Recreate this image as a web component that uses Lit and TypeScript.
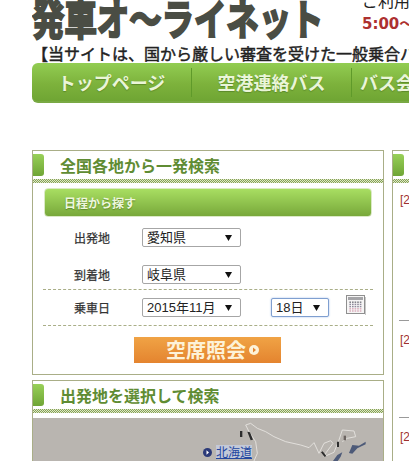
import { LitElement, html, svg, css } from "lit";
import { customElement } from "lit/decorators.js";

@customElement("app-root")
export class AppRoot extends LitElement {
  static styles = css`
    :host { display: block; width: 409px; height: 461px; overflow: hidden; background: #fff; font-family: "Liberation Sans", "Noto Sans CJK JP", sans-serif; color: #333; }
    * { box-sizing: border-box; }
    .page { width: 900px; padding-left: 32px; height: 461px; overflow: hidden; }
    .top { display: flex; height: 44px; overflow: hidden; }
    .logo { width: 330px; height: 40px; margin-top: 3px; flex: none; font-family: "Noto Sans CJK JP", sans-serif; font-weight: 700; font-size: 32.4px; line-height: 40px; color: #4a4d44; -webkit-text-stroke: 1.7px #4a4d44; white-space: nowrap; transform: scaleY(1.3); transform-origin: 0 100%; }
    .info { margin-top: -9px; color: #222; font-size: 16px; line-height: 18px; white-space: nowrap; font-family: "Noto Sans CJK JP", sans-serif; }
    .hours { color: #ad3030; font-family: "DejaVu Sans", "Noto Sans CJK JP", sans-serif; font-weight: 700; font-size: 15px; line-height: 20px; margin-top: 5px; }
    .notice { height: 19px; font-family: "Noto Sans CJK JP", sans-serif; font-size: 16px; line-height: 19px; font-weight: 400; color: #222; white-space: nowrap; -webkit-text-stroke: .45px #222; }
    .nav { display: flex; height: 40px; width: 700px; border-radius: 6px; background: linear-gradient(#92cd52, #7db23c 55%, #6fa533); border-bottom: 2px solid #79a944; align-items: center; }
    .nav a { width: 160px; flex: none; height: 29px; display: flex; align-items: center; justify-content: center; font-family: "Noto Sans CJK JP", sans-serif; font-weight: 700; font-size: 18px; color: #eaf5d8; text-shadow: 0 1px 1px #5b8a2a; border-right: 1px solid #5f9a2a; }
    .nav a.last { justify-content: flex-start; padding-left: 8px; border-right: 0; }
    .cols { display: flex; gap: 8px; margin-top: 47px; align-items: flex-start; }
    .left { width: 352px; flex: none; display: flex; flex-direction: column; gap: 5px; }
    .panel { border: 1px solid #a9ae87; background: #fff; }
    .title { display: flex; align-items: center; height: 28px; }
    .pill { width: 11px; height: 22px; flex: none; border-radius: 0 3px 3px 0; background: linear-gradient(#98d058, #6fa535); }
    .title h2 { margin: 0 0 0 16px; font-family: "Noto Sans CJK JP", sans-serif; font-size: 16px; line-height: 22px; font-weight: 700; color: #5f8c33; white-space: nowrap; }
    .band { height: 4px; background: repeating-conic-gradient(#86a257 0 25%, #dfe8c8 0 50%) 0 0 / 2px 2px; }
    .body { padding: 5px 10px 11px; }
    .bar { margin: 0 1px; height: 29px; border: 1px solid #dbe9c6; border-radius: 4px; background: linear-gradient(#a8de62, #78a83a); display: flex; align-items: center; padding-left: 19px; font-family: "Noto Sans CJK JP", sans-serif; font-size: 12px; font-weight: 700; color: #eef7de; text-shadow: 0 1px 1px #5f8a2e; }
    .row { display: flex; align-items: center; padding-left: 31px; height: 19px; }
    .row.a { margin-top: 11px; }
    .row.b { margin-top: 18px; }
    .row.c { height: 37px; margin-top: 5px; border-top: 1px dashed #a9ae87; border-bottom: 1px dashed #a9ae87; }
    label { width: 68px; flex: none; font-size: 12px; font-family: "Noto Sans CJK JP", sans-serif; font-weight: 400; -webkit-text-stroke: .25px #333; color: #333; white-space: nowrap; }
    .sel { position: relative; width: 99px; height: 19px; flex: none; }
    .sel.day { width: 58px; margin-left: 30px; }
    select { appearance: none; -webkit-appearance: none; width: 100%; height: 100%; margin: 0; padding: 0 0 0 4px; border: 1px solid #a6a6a6; border-radius: 2px; background: #fff; font-family: "Liberation Sans", "Noto Sans CJK JP", sans-serif; font-size: 13px; color: #222; outline: none; }
    .sel.day select { border-color: #7f9fd0; box-shadow: 0 0 2px #9db8e6; }
    .sel svg { position: absolute; right: 9px; top: 7px; width: 7px; height: 6px; pointer-events: none; }
    .cal { width: 20px; height: 20px; flex: none; margin: 0 0 5px 17px; }
    .btnrow { padding-left: 91px; margin-top: 11px; }
    .btn { width: 147px; height: 26px; display: flex; align-items: center; padding-left: 32px; gap: 3px; border: 0; background: linear-gradient(#f0a345, #e4842f); font-family: "Noto Sans CJK JP", sans-serif; font-size: 20px; line-height: 26px; font-weight: 700; color: #fdf2d8; }
    .btn svg { width: 10px; height: 10px; flex: none; }
    .map { position: relative; height: 60px; margin-top: 5px; background: #b9b5b0; overflow: hidden; }
    .map > svg { position: absolute; left: 0; top: 0; width: 350px; height: 60px; }
    .link { position: absolute; left: 170px; top: 27px; display: flex; align-items: center; gap: 4px; font-size: 12px; line-height: 14px; color: #2447a0; white-space: nowrap; font-family: "Noto Sans CJK JP", sans-serif; }
    .link span { text-decoration: underline; background: #c3c9d8; }
    .link svg { width: 9px; height: 9px; }
    .right { width: 300px; flex: none; }
    .panel.r { height: 400px; border-right: 0; }
    .item { padding: 10px 0 0 7px; font-size: 12px; line-height: 14px; color: #a03030; }
    .item.one { height: 137px; }
    .item.two { height: 97px; }
    .item.next { border-top: 1px solid #9a9a9a; margin-left: 6px; padding: 12px 0 0 1px; }
  `;

  private arrow() {
    return html`<svg viewBox="0 0 7 6"><path d="M0 0h7L3.5 6z" fill="#111"/></svg>`;
  }

  private calendar() {
    const cells = [];
    for (let r = 0; r < 5; r++) {
      for (let c = 0; c < 5; c++) {
        const fill = r > 2 ? "#d9a8b8" : r === 0 ? "#77777f" : "#8f8a9c";
        cells.push(svg`<rect x=${3.4 + c * 2.6} y=${6.5 + r * 2.2} width="1.6" height="1.4" fill=${fill}/>`);
      }
    }
    return html`<svg class="cal" viewBox="0 0 20 20">
      <rect x=".5" y=".5" width="18" height="18" fill="#f6f5f5" stroke="#8f8f8f"/>
      <rect x="19" y="2" width="1" height="18" fill="#c8c8c8"/>
      <rect x="2" y="2" width="15" height="3" fill="#a5a5a8"/>
      ${cells}
    </svg>`;
  }

  render() {
    return html`
      <div class="page">
        <div class="top">
          <div class="logo">発車オ〜ライネット</div>
          <div class="info">ご利用可能時間<div class="hours">5:00〜24:00</div></div>
        </div>
        <div class="notice">【当サイトは、国から厳しい審査を受けた一般乗合バス会社のみを掲載しています】</div>
        <nav class="nav">
          <a>トップページ</a>
          <a>空港連絡バス</a>
          <a class="last">バス会社一覧</a>
        </nav>
        <div class="cols">
          <div class="left">
            <section class="panel">
              <div class="title"><div class="pill"></div><h2>全国各地から一発検索</h2></div>
              <div class="band"></div>
              <div class="body">
                <div class="bar">日程から探す</div>
                <div class="row a"><label>出発地</label><div class="sel"><select><option>愛知県</option></select>${this.arrow()}</div></div>
                <div class="row b"><label>到着地</label><div class="sel"><select><option>岐阜県</option></select>${this.arrow()}</div></div>
                <div class="row c">
                  <label>乗車日</label>
                  <div class="sel"><select><option>2015年11月</option></select>${this.arrow()}</div>
                  <div class="sel day"><select><option>18日</option></select>${this.arrow()}</div>
                  ${this.calendar()}
                </div>
                <div class="btnrow">
                  <button class="btn">空席照会<svg viewBox="0 0 10 10"><circle cx="5" cy="5" r="5" fill="#fdf2d8"/><path d="M4 2.6 7 5 4 7.4z" fill="#e4842f"/></svg></button>
                </div>
              </div>
            </section>
            <section class="panel">
              <div class="title"><div class="pill"></div><h2>出発地を選択して検索</h2></div>
              <div class="band"></div>
              <div class="map">
                <svg viewBox="0 0 350 60">
                  <g transform="translate(176 -43) scale(.3333)">
                    <path d="M110 150 125 145 145 160 170 170 195 185 230 200 275 210 300 218 315 203 330 235 345 205 365 197 372 205 352 232 345 245 375 232 390 195 400 165 435 168 440 185 415 190 400 200M110 150 120 170 140 200 145 235 135 258" fill="none" stroke="#e8e6e2" stroke-width="2.6"/>
                    <path d="M372 258 385 240 400 232 395 245 385 260zM420 234 430 210 450 212 470 200 470 208 445 220 430 236z" fill="#4d5a78"/>
                    <path d="M93 168h7v18h-7zM115 170l8 2 9 22-7 2zM384 200h6v16h-6zM336 232l5-3 11 14-5 3z" fill="#2d2d2d"/>
                    <path d="M404 182h7v14h-7z" fill="#6b6460"/>
                  </g>
                </svg>
                <a class="link"><svg viewBox="0 0 9 9"><circle cx="4.5" cy="4.5" r="4.5" fill="#2c3a78"/><path d="M3.5 2.2 6 4.5 3.5 6.8z" fill="#fff"/></svg><span>北海道</span></a>
              </div>
            </section>
          </div>
          <div class="right">
            <section class="panel r">
              <div class="title"><div class="pill"></div></div>
              <div class="band"></div>
              <div class="item one">[2015/11/10]</div>
              <div class="item two next">[2015/11/05]</div>
              <div class="item next">[2015/10/28]</div>
            </section>
          </div>
        </div>
      </div>
    `;
  }
}
